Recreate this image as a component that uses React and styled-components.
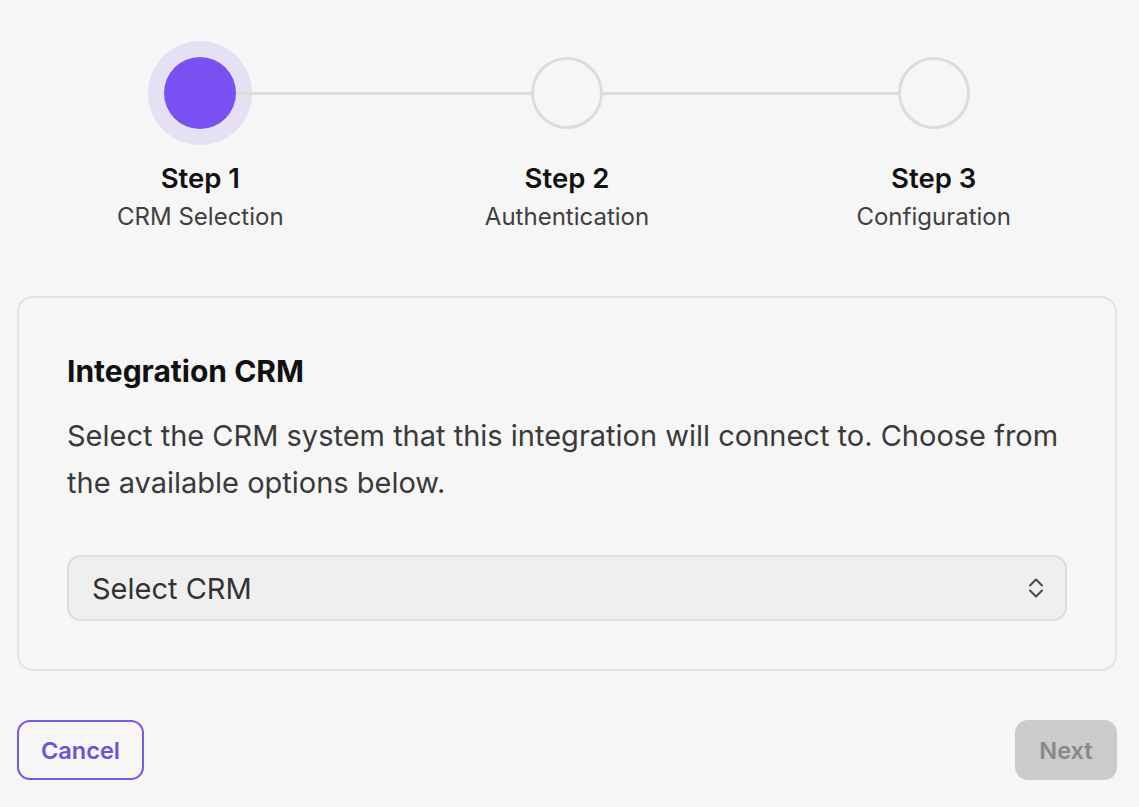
import styled, { createGlobalStyle } from "styled-components";

const GlobalStyle = createGlobalStyle`
  * { box-sizing: border-box; }
  html, body {
    margin: 0;
    background: #f6f6f6;
    font-family: Inter, "Noto Sans", sans-serif;
    color: #111;
  }
`;

const steps = [
  { title: "Step 1", sub: "CRM Selection" },
  { title: "Step 2", sub: "Authentication" },
  { title: "Step 3", sub: "Configuration" },
];

function App() {
  const current = 0;
  return (
    <>
      <GlobalStyle />
      <Page>
        <Stepper>
          {steps.map((s, i) => (
            <Step key={s.title} $last={i === steps.length - 1}>
              <Halo $active={i === current}>
                <Dot $active={i === current} />
              </Halo>
              <StepTitle>{s.title}</StepTitle>
              <StepSub>{s.sub}</StepSub>
            </Step>
          ))}
        </Stepper>

        <Card>
          <CardTitle>Integration CRM</CardTitle>
          <CardText>
            Select the CRM system that this integration will connect to. Choose from
            the available options below.
          </CardText>
          <SelectBox>
            <span>Select CRM</span>
            <svg width="18" height="24" viewBox="0 0 18 24" fill="none" stroke="#4a4a4a" strokeWidth="2" strokeLinecap="round" strokeLinejoin="round">
              <path d="M3 9.5 L9 3.5 L15 9.5" />
              <path d="M3 14.5 L9 20.5 L15 14.5" />
            </svg>
          </SelectBox>
        </Card>

        <Footer>
          <CancelButton>Cancel</CancelButton>
          <NextButton disabled>Next</NextButton>
        </Footer>
      </Page>
    </>
  );
}

export default App;

const Page = styled.div`
  width: 1100px;
  margin-left: 17px;
  padding-top: 41px;
`;

const Stepper = styled.div`
  display: grid;
  grid-template-columns: repeat(3, 1fr);
`;

const Step = styled.div`
  position: relative;
  display: flex;
  flex-direction: column;
  align-items: center;
  &::after {
    content: "";
    display: ${(p) => (p.$last ? "none" : "block")};
    position: absolute;
    top: 51px;
    left: 50%;
    width: 100%;
    height: 3px;
    background: #dcdcdc;
    z-index: 1;
  }
`;

const Halo = styled.div`
  width: 104px;
  height: 104px;
  border-radius: 50%;
  display: flex;
  align-items: center;
  justify-content: center;
  background: ${(p) => (p.$active ? "#e6e0f4" : "transparent")};
`;

const Dot = styled.div`
  position: relative;
  z-index: 2;
  width: 72px;
  height: 72px;
  border-radius: 50%;
  background: ${(p) => (p.$active ? "#7950f2" : "#f6f6f6")};
  border: ${(p) => (p.$active ? "none" : "3px solid #dcdcdc")};
`;

const StepTitle = styled.div`
  margin-top: 17px;
  font-size: 27.5px;
  font-weight: 600;
  line-height: 32px;
  color: #111;
`;

const StepSub = styled.div`
  margin-top: 9px;
  font-size: 24px;
  line-height: 28px;
  color: #404040;
`;

const Card = styled.div`
  margin-top: 65px;
  border: 2px solid #e2e2e2;
  border-radius: 16px;
  background: #f6f6f6;
  padding: 55px 48px 48px;
`;

const CardTitle = styled.h2`
  margin: 0;
  font-size: 30px;
  line-height: 36px;
  font-weight: 700;
  color: #111;
`;

const CardText = styled.p`
  margin: 23px 0 0;
  font-size: 29px;
  line-height: 47px;
  color: #3a3a3a;
`;

const SelectBox = styled.div`
  margin-top: 49px;
  height: 66px;
  border: 2px solid #dcdcdc;
  border-radius: 14px;
  background: #efefef;
  display: flex;
  align-items: center;
  justify-content: space-between;
  padding: 0 20px 0 23px;
  font-size: 29px;
  color: #333;
`;

const Footer = styled.div`
  margin-top: 49px;
  display: flex;
  justify-content: space-between;
`;

const BaseButton = styled.button`
  height: 60px;
  border-radius: 13px;
  font-family: inherit;
  font-size: 23.5px;
  font-weight: 600;
  padding: 0;
`;

const CancelButton = styled(BaseButton)`
  width: 127px;
  background: transparent;
  border: 2px solid #7b55e6;
  color: #7150dc;
`;

const NextButton = styled(BaseButton)`
  width: 102px;
  background: #cbcbcb;
  border: none;
  color: #888;
`;
